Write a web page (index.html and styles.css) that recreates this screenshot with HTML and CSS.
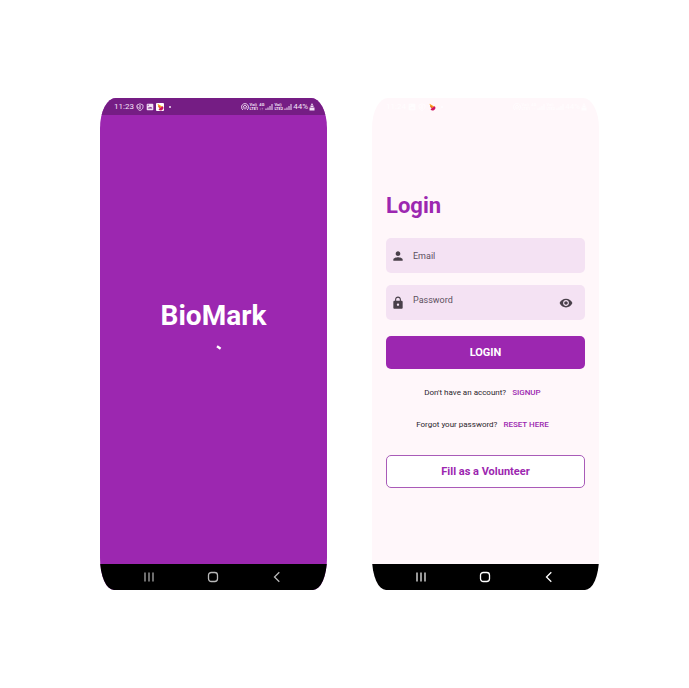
FILE: index.html
```html
<!DOCTYPE html>
<html lang="en">
<head>
<meta charset="utf-8">
<meta name="viewport" content="width=device-width, initial-scale=1">
<title>BioMark</title>
<link rel="stylesheet" href="styles.css">
</head>
<body>
<svg width="0" height="0" class="sprite" aria-hidden="true">
  <symbol id="shield" viewBox="0 0 8 8"><path d="M1 2 4 .8 7 2v2c0 1.700-1.200 2.800-3 3.500C2.200 6.800 1 5.700 1 4z" fill="none" stroke="currentColor" stroke-width=".8"/><path d="M4 2v4M1 3.500l2 2" stroke="currentColor"/></symbol>
  <symbol id="photo" viewBox="0 0 8 8"><path fill="currentColor" fill-rule="evenodd" d="M1.500.7h5A.8.8 0 0 1 7.300 1.500v5a.8.8 0 0 1-.8.8h-5a.8.8 0 0 1-.8-.8v-5a.8.8 0 0 1 .8-.8zM1.700 5.500h4.700L4.900 3.700l-1 1.100-.8-.8zM1.700 1.700v1h1v-1z"/></symbol>
  <symbol id="app" viewBox="0 0 8 8"><path d="M1.500.8 7 4 3 5z" fill="#f6a21b"/><path d="M6.800 3.200A2.500 2.500 0 0 1 2.500 6.300L4.600 4.400z" fill="#cf1460"/><path d="M1.800 2.500 5 4.200 3.200 5z" fill="#e9532c"/></symbol>
  <symbol id="hotspot" viewBox="0 0 8 8"><path d="M2 7a3.500 3.500 0 1 1 4 0M2.800 5.600a1.800 1.800 0 1 1 2.400 0M4 4v2.500" fill="none" stroke="currentColor" stroke-width=".9"/></symbol>
  <symbol id="signal" viewBox="0 0 8 8"><path d="M1 7V5.500M3 7V4.500M5 7V3M7 7V1" stroke="currentColor"/></symbol>
  <symbol id="battery" viewBox="0 0 6 8"><path d="M2 .8h2v1H2z M1.500 2.500h3V4h-3z M.5 4.500h5v3h-5z" fill="currentColor"/></symbol>
  <symbol id="recents" viewBox="0 0 12 12"><path d="M2 1.500v9M6 1.500v9M10 1.500v9" stroke="currentColor" stroke-width="1.200"/></symbol>
  <symbol id="home" viewBox="0 0 12 12"><rect x="1.500" y="1.500" width="9" height="9" rx="2.800" fill="none" stroke="currentColor" stroke-width="1.300"/></symbol>
  <symbol id="back" viewBox="0 0 12 12"><path d="M8.300 1.300 3.500 6l4.800 4.700" fill="none" stroke="currentColor" stroke-width="1.300"/></symbol>
</svg>
<main class="showcase">
  <section class="phone phone--splash" aria-label="Splash screen">
    <header class="status">
      <div class="status__group">
        <span>11:23</span>
        <svg><use href="#shield"/></svg>
        <svg><use href="#photo"/></svg>
        <svg class="status__app"><use href="#app"/></svg>
        <span class="status__dot"></span>
      </div>
      <div class="status__group status__group--end">
        <svg><use href="#hotspot"/></svg>
        <span class="status__net">Voi)<br>LTE1</span>
        <span class="status__net">4G<br>↓↑</span>
        <svg><use href="#signal"/></svg>
        <span class="status__net">Voi)<br>LTE2</span>
        <svg><use href="#signal"/></svg>
        <span>44%</span>
        <svg class="status__battery"><use href="#battery"/></svg>
      </div>
    </header>
    <div class="splash">
      <h1 class="splash__name">BioMark</h1>
      <svg class="splash__spinner" viewBox="0 0 16 16" aria-hidden="true"><path d="M11 2.300 14.600 4.700" stroke="#fff" stroke-width="2.400"/></svg>
    </div>
    <nav class="softkeys" aria-label="System navigation">
      <button type="button" aria-label="Recents"><svg><use href="#recents"/></svg></button>
      <button type="button" aria-label="Home"><svg><use href="#home"/></svg></button>
      <button type="button" aria-label="Back"><svg><use href="#back"/></svg></button>
    </nav>
  </section>

  <section class="phone phone--login" aria-label="Login screen">
    <header class="status">
      <div class="status__group">
        <span>11:24</span>
        <svg><use href="#photo"/></svg>
        <svg><use href="#shield"/></svg>
        <svg class="status__app"><use href="#app"/></svg>
        <span class="status__dot"></span>
      </div>
      <div class="status__group status__group--end">
        <svg><use href="#hotspot"/></svg>
        <span class="status__net">Voi)<br>LTE1</span>
        <span class="status__net">4G<br>↓↑</span>
        <svg><use href="#signal"/></svg>
        <span class="status__net">Voi)<br>LTE2</span>
        <svg><use href="#signal"/></svg>
        <span>44%</span>
        <svg class="status__battery"><use href="#battery"/></svg>
      </div>
    </header>
    <form class="login">
      <h2 class="login__title">Login</h2>
      <div class="field">
        <svg viewBox="0 0 24 24" aria-hidden="true"><path d="M12 12c2.210 0 4-1.790 4-4s-1.790-4-4-4-4 1.790-4 4 1.790 4 4 4zm0 2c-2.670 0-8 1.340-8 4v2h16v-2c0-2.660-5.330-4-8-4z"/></svg>
        <input type="email" placeholder="Email" aria-label="Email">
      </div>
      <div class="field field--password">
        <svg viewBox="0 0 24 24" aria-hidden="true"><path d="M18 8h-1V6c0-2.760-2.240-5-5-5S7 3.240 7 6v2H6c-1.100 0-2 .9-2 2v10c0 1.100.9 2 2 2h12c1.100 0 2-.9 2-2V10c0-1.100-.9-2-2-2zm-6 9c-1.100 0-2-.9-2-2s.9-2 2-2 2 .9 2 2-.9 2-2 2zm3.100-9H8.900V6c0-1.710 1.390-3.100 3.100-3.100s3.100 1.390 3.100 3.100v2z"/></svg>
        <input type="password" placeholder="Password" aria-label="Password">
        <button type="button" class="field__reveal" aria-label="Show password"><svg viewBox="0 0 24 24"><path d="M12 4.500C7 4.500 2.730 7.610 1 12c1.730 4.390 6 7.500 11 7.500s9.270-3.110 11-7.500c-1.730-4.390-6-7.500-11-7.500zM12 17c-2.760 0-5-2.240-5-5s2.240-5 5-5 5 2.240 5 5-2.240 5-5 5zm0-8c-1.660 0-3 1.340-3 3s1.340 3 3 3 3-1.340 3-3-1.340-3-3-3z"/></svg></button>
      </div>
      <button type="button" class="btn btn--primary">LOGIN</button>
      <p class="hint">Don't have an account? <a href="#signup">SIGNUP</a></p>
      <p class="hint">Forgot your password? <a href="#reset">RESET HERE</a></p>
      <button type="button" class="btn btn--outline">Fill as a Volunteer</button>
    </form>
    <nav class="softkeys" aria-label="System navigation">
      <button type="button" aria-label="Recents"><svg><use href="#recents"/></svg></button>
      <button type="button" aria-label="Home"><svg><use href="#home"/></svg></button>
      <button type="button" aria-label="Back"><svg><use href="#back"/></svg></button>
    </nav>
  </section>
</main>
</body>
</html>
```
FILE: styles.css
```css
* { box-sizing: border-box; }

body {
  margin: 0;
  background: #fff;
  font-family: Roboto, "Liberation Sans", sans-serif;
}

h1, h2, p { margin: 0; }

button {
  border: 0;
  padding: 0;
  background: none;
  color: inherit;
  font: inherit;
}

svg { display: block; }

.sprite { position: absolute; }

.showcase {
  min-height: 100vh;
  display: grid;
  grid-template-columns: 1fr 1fr;
  gap: 45px;
  align-items: center;
  align-content: center;
  padding: 0 90px 0 100px;
}

.phone {
  display: flex;
  flex-direction: column;
  aspect-ratio: 227 / 492;
  overflow: hidden;
  border-radius: 16px 16px 14px 14px / 30px 30px 32px 32px;
}

.phone--splash { background: #9c27b0; }
.phone--login { background: #fff7fa; }

/* Status bar */
.status {
  display: flex;
  justify-content: space-between;
  align-items: center;
  height: 17px;
  padding: 0 12px 0 14px;
  color: #f3e3f6;
  font-size: 8px;
  line-height: 8px;
  white-space: nowrap;
}

.phone--splash .status { background: #751d84; }
.phone--login .status { color: #fffdfe; }

.status__group {
  display: flex;
  align-items: center;
  gap: 2px;
}

.status__group--end { gap: 1px; }

.status__group svg {
  width: 8px;
  height: 8px;
}

.status__group .status__battery { width: 6px; }

.phone--splash .status__app {
  background: #fff;
  border-radius: 1px;
}

.status__dot {
  width: 2px;
  height: 2px;
  margin-left: 3px;
  border-radius: 50%;
  background: currentColor;
}

.status__net {
  font-size: 4px;
  line-height: 4px;
  font-weight: 700;
}

/* Splash */
.splash {
  flex: 1;
  display: flex;
  flex-direction: column;
  align-items: center;
  justify-content: center;
  gap: 12px;
  padding-bottom: 20px;
  color: #fff;
}

.splash__name {
  font-size: 28px;
  line-height: 32px;
  font-weight: 700;
}

.splash__spinner {
  width: 16px;
  height: 16px;
}

/* Login */
.login {
  flex: 1;
  display: flex;
  flex-direction: column;
  padding: 77px 14px 0;
  color: #2b262d;
}

.login__title {
  margin-bottom: 18px;
  color: #9c27b0;
  font-size: 22px;
  line-height: 28px;
  font-weight: 700;
}

.field {
  display: flex;
  align-items: center;
  gap: 8px;
  height: 35px;
  margin-bottom: 12px;
  padding: 0 12px 0 5px;
  border-radius: 5px;
  background: #f4e2f3;
}

.field svg {
  width: 14px;
  height: 14px;
  fill: #49404a;
}

.field input {
  flex: 1;
  min-width: 0;
  height: 100%;
  border: 0;
  padding: 0;
  background: none;
  color: #2b262d;
  font: 9px/12px Roboto, "Liberation Sans", sans-serif;
}

.field--password input { padding-bottom: 5px; }

.field input::placeholder {
  color: #5c505e;
  opacity: 1;
}

.btn {
  height: 33px;
  border-radius: 5px;
  font-size: 11px;
  line-height: 16px;
  font-weight: 700;
}

.btn--primary {
  margin: 4px 0 16px;
  background: #9c27b0;
  color: #fff;
}

.btn--outline {
  margin-top: 6px;
  border: 1px solid #a95bb8;
  background: #fff;
  color: #9c27b0;
}

.hint {
  margin-bottom: 16px;
  padding-right: 6px;
  text-align: center;
  font-size: 8px;
  line-height: 16px;
}

.hint a {
  margin-left: 4px;
  color: #9c27b0;
  font-weight: 500;
  text-decoration: none;
}

/* System navigation */
.softkeys {
  display: flex;
  justify-content: space-between;
  align-items: center;
  height: 26px;
  padding: 0 44px 0 43px;
  background: #000;
  color: #fff;
}

.phone--splash .softkeys { color: #b8b8b8; }

.softkeys svg {
  width: 12px;
  height: 12px;
}
```
